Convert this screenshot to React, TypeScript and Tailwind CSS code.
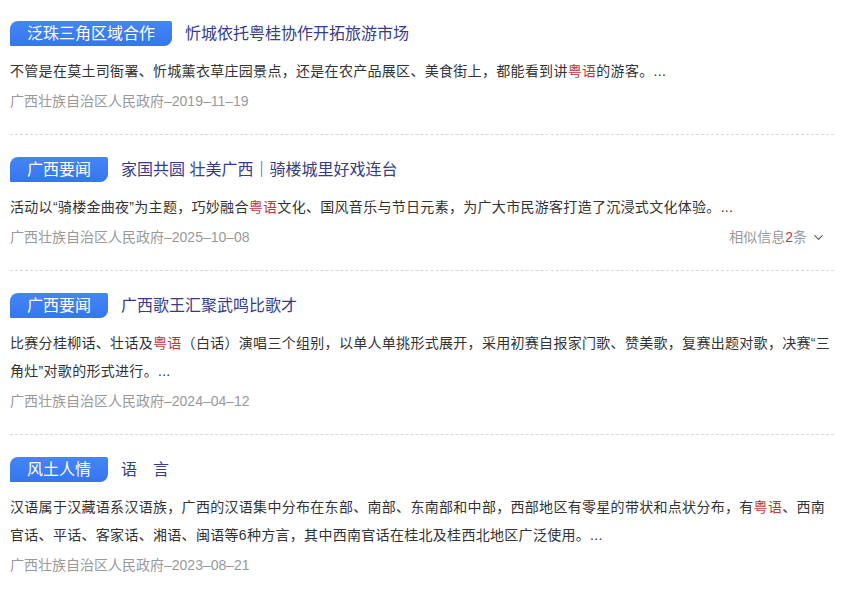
import React from "react";
import { ChevronDown } from "lucide-react";

const Red = ({ children }: { children: React.ReactNode }) => (
  <span className="text-[#c9343c]">{children}</span>
);

type Item = {
  tag: string;
  title: string;
  body: React.ReactNode;
  source: string;
  similar?: boolean;
};

const items: Item[] = [
  {
    tag: "泛珠三角区域合作",
    title: "忻城依托粤桂协作开拓旅游市场",
    body: (
      <>
        不管是在莫土司衙署、忻城薰衣草庄园景点，还是在农产品展区、美食街上，都能看到讲<Red>粤语</Red>的游客。...
      </>
    ),
    source: "广西壮族自治区人民政府–2019–11–19",
  },
  {
    tag: "广西要闻",
    title: "家国共圆 壮美广西｜骑楼城里好戏连台",
    body: (
      <>
        活动以“骑楼金曲夜”为主题，巧妙融合<Red>粤语</Red>文化、国风音乐与节日元素，为广大市民游客打造了沉浸式文化体验。...
      </>
    ),
    source: "广西壮族自治区人民政府–2025–10–08",
    similar: true,
  },
  {
    tag: "广西要闻",
    title: "广西歌王汇聚武鸣比歌才",
    body: (
      <>
        比赛分桂柳话、壮话及<Red>粤语</Red>（白话）演唱三个组别，以单人单挑形式展开，采用初赛自报家门歌、赞美歌，复赛出题对歌，决赛“三角灶”对歌的形式进行。...
      </>
    ),
    source: "广西壮族自治区人民政府–2024–04–12",
  },
  {
    tag: "风土人情",
    title: "语　言",
    body: (
      <>
        汉语属于汉藏语系汉语族，广西的汉语集中分布在东部、南部、东南部和中部，西部地区有零星的带状和点状分布，有<Red>粤语</Red>、西南官话、平话、客家话、湘语、闽语等6种方言，其中西南官话在桂北及桂西北地区广泛使用。...
      </>
    ),
    source: "广西壮族自治区人民政府–2023–08–21",
  },
];

export default function App() {
  return (
    <div
      className="w-[844px] h-[596px] overflow-hidden bg-white px-[10px]"
      style={{ fontFamily: '"Liberation Sans", "Noto Sans CJK SC", sans-serif' }}
    >
      {items.map((it, i) => (
        <div
          key={i}
          className={
            (i === 0 ? "pt-[21px] " : "pt-[22px] ") +
            (i < items.length - 1
              ? "pb-[23px] border-b border-dashed border-[#d9d9d9]"
              : "")
          }
        >
          <div className="flex items-center h-[25px]">
            <div className="h-[25px] px-[17px] text-[16px] leading-[25px] text-white bg-gradient-to-b from-[#4586f4] to-[#3575ee] rounded-tl-[8px] rounded-br-[8px] rounded-tr-[2px] rounded-bl-[1px] whitespace-nowrap">
              {it.tag}
            </div>
            <div className="ml-[13px] text-[16px] leading-[25px] text-[#363c85] whitespace-nowrap">
              {it.title}
            </div>
          </div>
          <div className="mt-[11px] text-[14px] leading-[28px] text-[#333333] tracking-[0.3px]">
            {it.body}
          </div>
          <div className="mt-[6px] flex items-center justify-between text-[14px] leading-[20px] text-[#999999]">
            <span>{it.source}</span>
            {it.similar && (
              <span className="flex items-center mr-[8px]">
                相似信息<span className="text-[#c9343c]">2</span>条
                <ChevronDown className="ml-[4px] w-[15px] h-[15px] text-[#666]" strokeWidth={2} />
              </span>
            )}
          </div>
        </div>
      ))}
    </div>
  );
}
